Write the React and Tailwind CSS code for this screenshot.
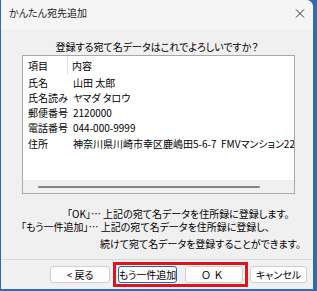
import React from "react";

const font = {
  fontFamily: '"Noto Sans CJK JP", "Noto Sans", sans-serif'
};

const rows = [
  ["氏名", "山田 太郎"],
  ["氏名読み", "ヤマダ タロウ"],
  ["郵便番号", "2120000"],
  ["電話番号", "044-000-9999"],
  ["住所", "神奈川県川崎市幸区鹿嶋田5-6-7\u00a0\u00a0FMVマンション222号室"]
];

function DialogButton({ label, className = "" }) {
  return (
    <button
      className={`h-[17px] px-0 rounded-[3px] border bg-[#fdfdfd] text-[10px] leading-none text-black whitespace-nowrap flex items-center justify-center ${className}`}
    >
      {label}
    </button>
  );
}

export default function App() {
  return (
    <div
      className="relative w-[317px] h-[291px] bg-[#2e6bb2] text-black [font-feature-settings:'palt']"
      style={font}
    >
      <div className="ml-[1px] w-[312px] h-[289px] bg-[#f0f0f0] rounded-tr-[7px] flex flex-col overflow-hidden">
        {/* title bar */}
        <div className="h-[29px] bg-[#f5f5f5] flex items-start justify-between pl-[8px] pr-[8px] pt-[6px]">
          <span className="text-[10px] leading-[14px] text-[#1b1b1b]">
            かんたん宛先追加
          </span>
          <svg width="10" height="9" viewBox="0 0 10 9" className="mt-[3px]">
            <path d="M1 0.5 L9 8.5 M9 0.5 L1 8.5" stroke="#333" strokeWidth="1" />
          </svg>
        </div>

        {/* question */}
        <div className="mt-[11px] h-[14px] text-center text-[10px] leading-[14px]">
          登録する宛て名データはこれでよろしいですか？
        </div>

        {/* list view */}
        <div className="mt-[1px] ml-[21px] w-[273px] h-[139px] bg-white border border-[#a9a9a9] flex flex-col text-[10px] leading-none">
          <div className="h-[19px] flex items-center">
            <div className="w-[45px] h-full pl-[5px] flex items-center border-r border-[#e3e3e3]">
              項目
            </div>
            <div className="pl-[4px]">内容</div>
          </div>
          {rows.map(([k, v]) => (
            <div key={k} className="h-[15.25px] flex items-center whitespace-nowrap overflow-hidden">
              <div className="w-[45px] shrink-0 pl-[5px]">{k}</div>
              <div className="pl-[5px]">{v}</div>
            </div>
          ))}
          <div className="flex-1" />
          <div className="h-[13px] bg-[#f0f0f0] flex items-center">
            <div className="ml-[15px] w-[222px] h-[2px] bg-[#858585] rounded-full" />
          </div>
        </div>

        {/* explanation */}
        <div className="text-[10px] leading-[13px] whitespace-nowrap">
          <div className="mt-[13px] pl-[66px]">「OK」… 上記の宛て名データを住所録に登録します。</div>
          <div className="pl-[20px]">「もう一件追加」… 上記の宛て名データを住所録に登録し、</div>
          <div className="mt-[4px] pl-[99px]">続けて宛て名データを登録することができます。</div>
        </div>

        {/* separator */}
        <div className="mt-[9px] h-[1px] bg-[#d9d9d9]" />

        {/* buttons */}
        <div className="mt-[6px] flex pl-[49px]">
          <DialogButton label="< 戻る" className="w-[60px] border-[#d0d0d0]" />
          <DialogButton
            label="もう一件追加"
            className="ml-[8px] w-[59px] border-[1.5px] border-[#1d64b3] text-[9.5px]"
          />
          <DialogButton label="ＯＫ" className="ml-[8px] w-[58px] border-[#d0d0d0] tracking-[4px]" />
          <DialogButton label="キャンセル" className="ml-[7px] w-[57px] border-[#d0d0d0]" />
        </div>
      </div>

      {/* highlight */}
      <div className="absolute left-[113px] top-[262px] w-[135px] h-[25px] border-[3px] border-[#e3131b]" />
    </div>
  );
}
